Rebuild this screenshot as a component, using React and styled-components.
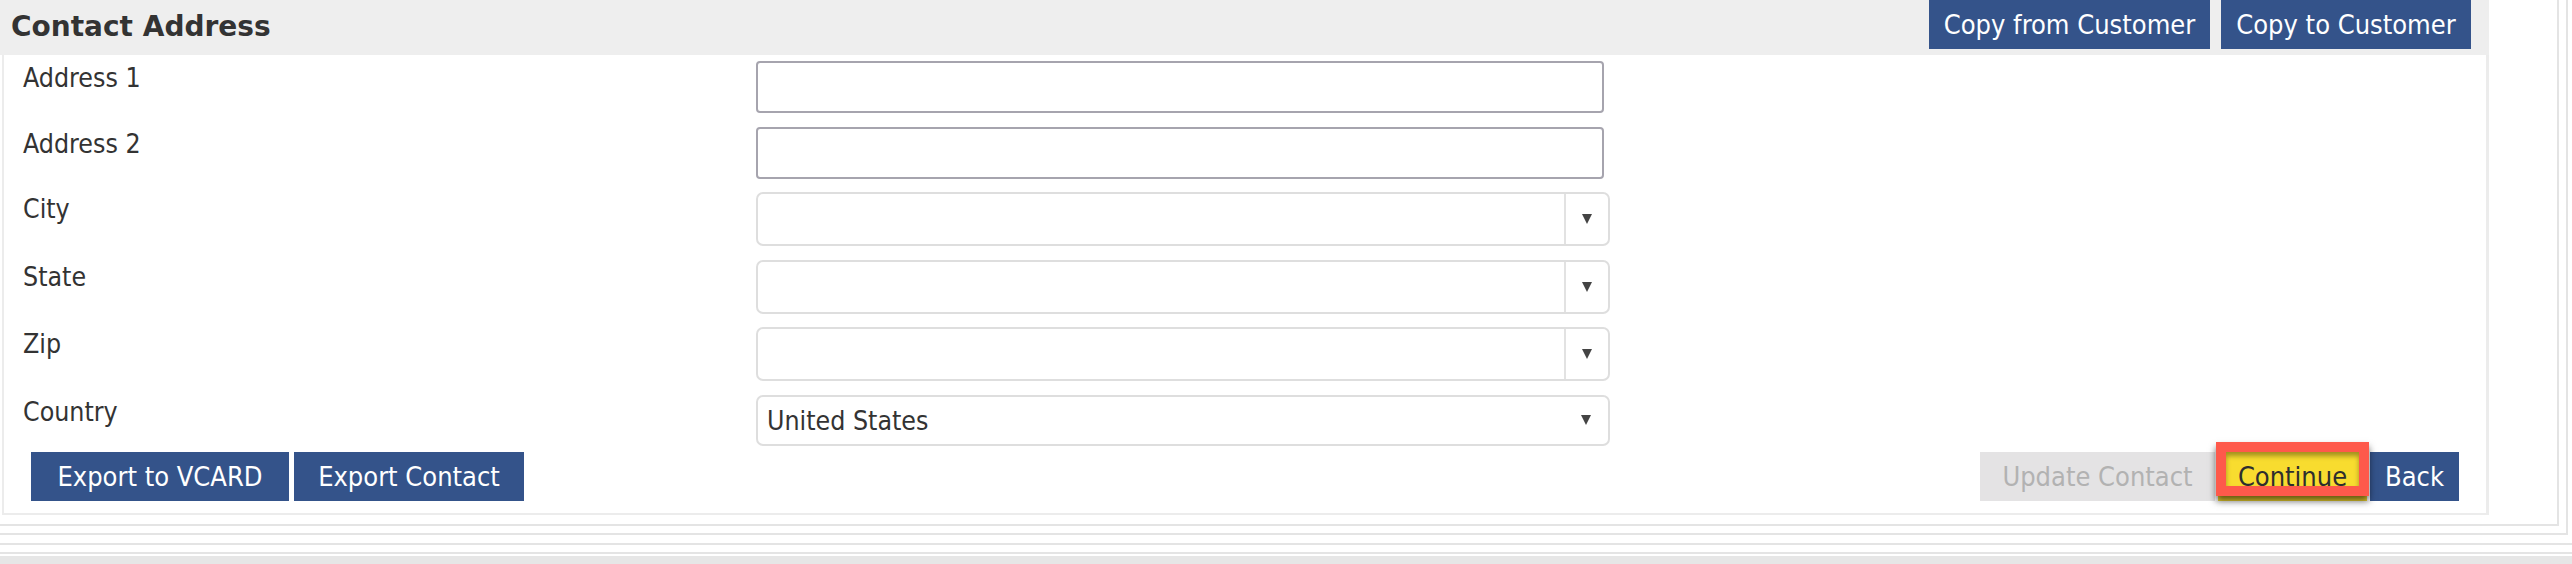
import React from 'react';
import styled, { createGlobalStyle } from 'styled-components';

const GlobalStyle = createGlobalStyle`
	html, body {
		margin: 0;
		padding: 0;
		background: #fff;
	}
	body {
		font-family: 'DejaVu Sans', Verdana, sans-serif;
		color: #333;
		overflow: hidden;
	}
	* {
		box-sizing: border-box;
	}
`;

const narrowFont = `'DejaVu Sans Condensed', 'DejaVu Sans', sans-serif`;

const Page = styled.div`
	width: 2572px;
	height: 564px;
	display: flex;
	flex-direction: column;
	overflow: hidden;
`;

const OuterFrame = styled.div`
	width: 2568px;
	padding: 0 7px 7px 0;
	border-right: 2px solid #e4e4e4;
	border-bottom: 2px solid #e4e4e4;
`;

const InnerFrame = styled.div`
	padding-bottom: 9px;
	border-right: 2px solid #e4e4e4;
	border-bottom: 2px solid #e4e4e4;
`;

const Rule = styled.div`
	height: 2px;
	margin-top: ${(props) => props.$gap}px;
	background: #e4e4e4;
`;

const BottomBand = styled.div`
	flex: 1;
	margin-top: 2px;
	background: #e6e6e6;
`;

const Panel = styled.section`
	width: 2489px;
`;

const PanelHeader = styled.header`
	height: 55px;
	display: flex;
	align-items: flex-start;
	justify-content: space-between;
	padding: 0 18px 0 11px;
	background: #eeeeee;
`;

const Title = styled.h2`
	margin: 0;
	font-size: 28px;
	font-weight: bold;
	line-height: 53px;
	color: #333;
`;

const ButtonGroup = styled.div`
	display: flex;
	gap: ${(props) => props.$gap}px;
`;

const buttonColors = {
	primary: { bg: '#34538a', fg: '#fff' },
	disabled: { bg: '#e4e3e4', fg: '#b2b2b2' },
	highlight: { bg: '#f8dc2f', fg: '#2e2e2e' },
};

const Button = styled.button`
	width: ${(props) => props.$width}px;
	height: 49px;
	padding: 0;
	border: none;
	border-radius: 0;
	font-family: ${narrowFont};
	font-size: 27px;
	line-height: 49px;
	text-align: center;
	white-space: nowrap;
	background: ${(props) => buttonColors[props.$variant || 'primary'].bg};
	color: ${(props) => buttonColors[props.$variant || 'primary'].fg};
	cursor: ${(props) => (props.$variant === 'disabled' ? 'default' : 'pointer')};
`;

const PanelBody = styled.div`
	margin-left: 2px;
	border-left: 2px solid #ececec;
	border-right: 3px solid #ececec;
	border-bottom: 2px solid #ececec;
	padding: 6px 27px 12px 19px;
`;

const Form = styled.div`
	display: flex;
	flex-direction: column;
	gap: 13.5px;
`;

const Row = styled.div`
	display: flex;
	align-items: flex-start;
`;

const Label = styled.label`
	width: 733px;
	padding-top: 2px;
	font-family: ${narrowFont};
	font-size: 26.5px;
	line-height: 30px;
	color: #333;
`;

const TextInput = styled.input`
	width: 848px;
	height: 52px;
	margin: 0;
	padding: 0 10px;
	border: 2px solid #a6a4ae;
	border-radius: 4px;
	font-family: ${narrowFont};
	font-size: 26.5px;
	background: #fff;
	outline: none;
`;

const SelectBox = styled.div`
	width: 854px;
	height: ${(props) => props.$height}px;
	display: flex;
	align-items: center;
	border: 2px solid #dedede;
	border-radius: 7px;
	background: #fff;
`;

const SelectValue = styled.span`
	flex: 1;
	padding-left: 9px;
	font-family: ${narrowFont};
	font-size: 26.5px;
	color: #333;
`;

const ArrowBox = styled.span`
	width: 44px;
	align-self: stretch;
	display: flex;
	align-items: center;
	justify-content: center;
	border-left: ${(props) => (props.$divider ? '2px solid #e2e2e2' : 'none')};
`;

const Triangle = styled.span`
	width: 0;
	height: 0;
	border-left: 5px solid transparent;
	border-right: 5px solid transparent;
	border-top: 10px solid #444;
`;

const Footer = styled.div`
	display: flex;
	justify-content: space-between;
	margin-top: 6.5px;
	padding-left: 8px;
`;

const HighlightWrap = styled.span`
	position: relative;
	display: inline-flex;
`;

const Highlight = styled.span`
	position: absolute;
	top: -10px;
	left: -2px;
	right: -2px;
	bottom: 5px;
	border: 10px solid #fe594b;
	box-shadow: 0 5px 7px rgba(0, 0, 0, 0.6), inset 0 4px 5px rgba(0, 0, 0, 0.35);
	pointer-events: none;
`;

function Select({ value, height = 54, divider = true }) {
	return (
		<SelectBox $height={height}>
			<SelectValue>{value}</SelectValue>
			<ArrowBox $divider={divider}>
				<Triangle />
			</ArrowBox>
		</SelectBox>
	);
}

export default function App() {
	return (
		<>
			<GlobalStyle />
			<Page>
				<OuterFrame>
					<InnerFrame>
						<Panel>
							<PanelHeader>
								<Title>Contact Address</Title>
								<ButtonGroup $gap={11}>
									<Button $width={281}>Copy from Customer</Button>
									<Button $width={250}>Copy to Customer</Button>
								</ButtonGroup>
							</PanelHeader>
							<PanelBody>
								<Form>
									<Row>
										<Label>Address 1</Label>
										<TextInput type="text" />
									</Row>
									<Row>
										<Label>Address 2</Label>
										<TextInput type="text" />
									</Row>
									<Row>
										<Label>City</Label>
										<Select />
									</Row>
									<Row>
										<Label>State</Label>
										<Select />
									</Row>
									<Row>
										<Label>Zip</Label>
										<Select />
									</Row>
									<Row>
										<Label>Country</Label>
										<Select value="United States" height={51} divider={false} />
									</Row>
								</Form>
								<Footer>
									<ButtonGroup $gap={5}>
										<Button $width={258}>Export to VCARD</Button>
										<Button $width={230}>Export Contact</Button>
									</ButtonGroup>
									<ButtonGroup $gap={3}>
										<Button $width={235} $variant="disabled">Update Contact</Button>
										<HighlightWrap>
											<Button $width={149} $variant="highlight">Continue</Button>
											<Highlight />
										</HighlightWrap>
										<Button $width={89}>Back</Button>
									</ButtonGroup>
								</Footer>
							</PanelBody>
						</Panel>
					</InnerFrame>
				</OuterFrame>
				<Rule $gap={8} />
				<Rule $gap={7} />
				<BottomBand />
			</Page>
		</>
	);
}
